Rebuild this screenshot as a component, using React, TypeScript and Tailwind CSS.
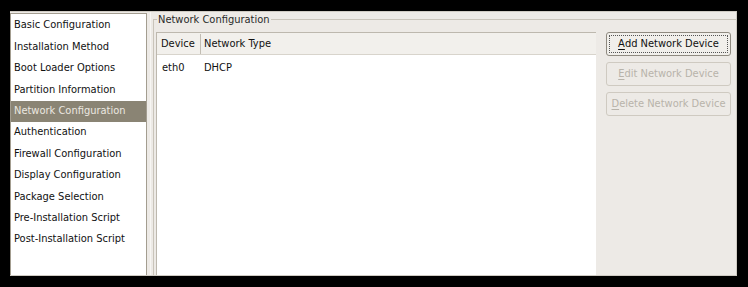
import React from 'react'

const sections = [
  'Basic Configuration',
  'Installation Method',
  'Boot Loader Options',
  'Partition Information',
  'Network Configuration',
  'Authentication',
  'Firewall Configuration',
  'Display Configuration',
  'Package Selection',
  'Pre-Installation Script',
  'Post-Installation Script',
]

const devices = [{ name: 'eth0', type: 'DHCP' }]

function Button({ label, mnemonic, enabled, focused }: { label: string; mnemonic: string; enabled?: boolean; focused?: boolean }) {
  const rest = label.slice(1)
  return (
    <button
      className={`h-[24px] w-[125px] rounded-[3px] border p-[2px] ${enabled ? 'border-[#8f8a80] bg-[#f1efeb] text-[#101010]' : 'border-[#cfcac1] bg-[#edeae6] text-[#b8b3aa]'}`}
    >
      <span className={`flex h-full w-full items-center justify-center rounded-[1px] ${focused ? 'border border-dotted border-[#555]' : ''}`}>
        <span className="underline decoration-1 underline-offset-2">{mnemonic}</span>
        {rest}
      </span>
    </button>
  )
}

export default function App() {
  return (
    <div
      className="h-[287px] w-[748px] bg-black pl-[10px] pr-[11px] pt-[11px] pb-[11px] text-[11px] text-[#111]"
      style={{ fontFamily: '"DejaVu Sans Condensed", "DejaVu Sans", sans-serif' }}
    >
      <div className="flex h-full border-r border-b border-t border-[#cfcbc3] bg-[#edeae6]">
        {/* section list */}
        <div className="mt-[1px] flex w-[137px] flex-col border border-b-0 border-[#a39d90] bg-white pt-[1px]">
          {sections.map(s => (
            <div
              key={s}
              className={`flex h-[21.4px] items-center pl-[3px] ${s === 'Network Configuration' ? 'bg-[#8a8474] text-[#ece8e0]' : ''}`}
            >
              {s}
            </div>
          ))}
        </div>

        {/* pane handle */}
        <div className="flex w-[6px] justify-center">
          <div className="w-[1px] bg-[#f7f6f3]" />
        </div>

        {/* network frame */}
        <div className="relative mt-[7px] flex flex-1 border-l border-t border-[#c9c4ba] pl-[2px] pt-[12px]">
          <span className="absolute left-[3px] top-[-7px] bg-[#edeae6] px-[1px] leading-[14px] text-[#2a2a2a]">
            Network Configuration
          </span>

          <div className="flex w-[440px] flex-col border-l border-t border-[#bdb8ae] bg-white">
            <div className="flex h-[22px] border-b border-[#d8d4cc] bg-[#f2f0ec] pt-[1px]">
              <div className="flex w-[44px] items-center border-r border-[#c2bdb3] pl-[4px]">Device</div>
              <div className="flex items-center pl-[3px]">Network Type</div>
            </div>
            {devices.map(d => (
              <div key={d.name} className="flex h-[26px] items-center pt-[1px]">
                <div className="w-[44px] pl-[5px]">{d.name}</div>
                <div className="pl-[3px]">{d.type}</div>
              </div>
            ))}
          </div>

          <div className="ml-[10px] flex flex-col gap-[6px]">
            <Button label="Add Network Device" mnemonic="A" enabled focused />
            <Button label="Edit Network Device" mnemonic="E" />
            <Button label="Delete Network Device" mnemonic="D" />
          </div>
        </div>
      </div>
    </div>
  )
}
